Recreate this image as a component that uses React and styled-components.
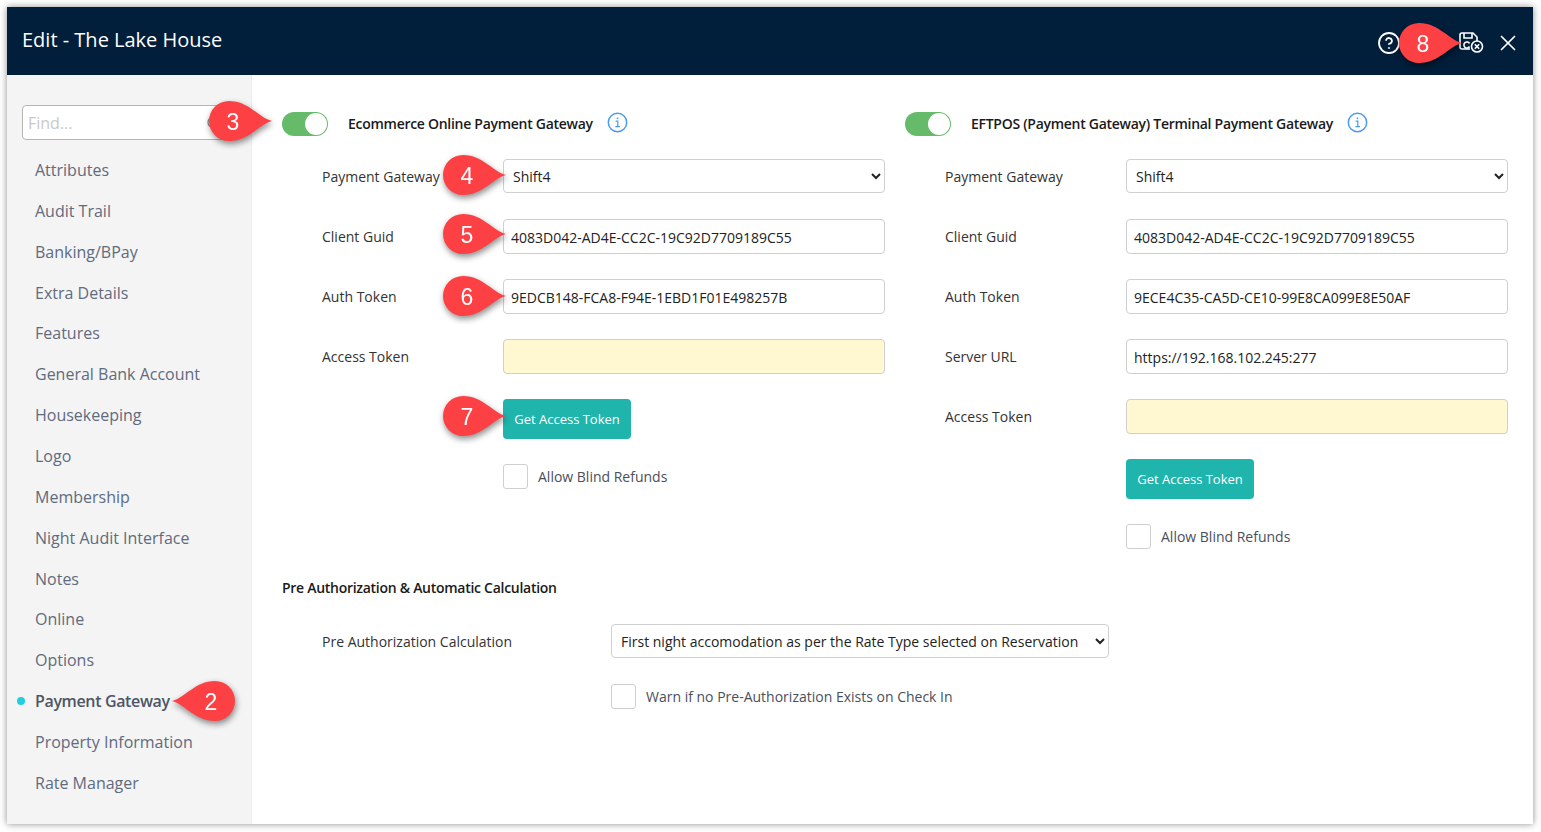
import styled, { createGlobalStyle } from 'styled-components';
import { Search, CircleHelp, X } from 'lucide-react';

const GlobalStyle = createGlobalStyle`
    html, body {
        margin: 0;
        padding: 0;
        background: #fff;
    }
    body {
        font-family: "Open Sans", "Liberation Sans", sans-serif;
        overflow: hidden;
    }
    * {
        box-sizing: border-box;
    }
`;

const Page = styled.div`
    width: 1541px;
    height: 832px;
    padding: 7px 8px 8px 7px;
`;

const Window = styled.div`
    position: relative;
    width: 1526px;
    height: 817px;
    display: flex;
    flex-direction: column;
    background: #fff;
    box-shadow: 0 0 7px rgba(0, 0, 0, 0.45);
`;

const Header = styled.header`
    height: 68px;
    flex: none;
    display: flex;
    align-items: center;
    justify-content: space-between;
    padding: 0 12px 0 15px;
    background: #011e3b;
    color: #fff;
`;

const Title = styled.h1`
    margin: -4px 0 0;
    font-size: 20px;
    font-weight: 400;
`;

const HeaderIcons = styled.div`
    display: flex;
    align-items: center;
    gap: 11px;
    padding-top: 3px;
`;

const HelpGap = styled.div`
    width: 36px;
`;

const Body = styled.div`
    flex: 1;
    display: flex;
    min-height: 0;
`;

const Sidebar = styled.aside`
    width: 245px;
    flex: none;
    padding: 30px 0 0 15px;
    background: #f4f4f4;
    border-right: 1px solid #ececec;
`;

const FindBox = styled.div`
    width: 210px;
    height: 35px;
    display: flex;
    align-items: center;
    padding: 0 5px;
    background: #fff;
    border: 1px solid #b5b5b5;
    border-radius: 4px;
    color: #8a8a8a;
`;

const FindInput = styled.input`
    width: 178px;
    border: 0;
    outline: 0;
    padding: 0;
    background: transparent;
    font: 400 16px "Open Sans", sans-serif;
    &::placeholder {
        color: #c9c9c9;
        opacity: 1;
    }
`;

const Nav = styled.nav`
    margin-top: 10px;
`;

const NavItem = styled.div`
    position: relative;
    height: 40.87px;
    line-height: 40px;
    padding-left: 13px;
    font-size: 16px;
    font-weight: ${(props) => (props.$active ? 600 : 400)};
    letter-spacing: ${(props) => (props.$active ? '-0.36px' : '0')};
    color: ${(props) => (props.$active ? '#4d5566' : '#5f6b7e')};

    ${(props) => props.$active && `
        &::before {
            content: "";
            position: absolute;
            left: -5px;
            top: 16px;
            width: 8px;
            height: 8px;
            border-radius: 50%;
            background: #1fcfe0;
        }
    `}
`;

const Content = styled.main`
    flex: 1;
    padding: 37px 25px 0 30px;
`;

const Columns = styled.div`
    display: grid;
    grid-template-columns: 603px 603px;
    gap: 20px;
    height: 466px;
`;

const GatewayHead = styled.div`
    display: flex;
    align-items: center;
    height: 24px;
    margin-bottom: 23px;
    color: #4a9bf0;

    svg {
        margin-top: -3px;
    }
`;

const Toggle = styled.div`
    position: relative;
    width: 46px;
    height: 24px;
    margin-right: 20px;
    border-radius: 12px;
    background: #66bb6a;

    &::after {
        content: "";
        position: absolute;
        right: 1px;
        top: 1px;
        width: 22px;
        height: 22px;
        border-radius: 50%;
        background: #fff;
    }
`;

const GatewayTitle = styled.div`
    margin: -2px 14px 0 0;
    font-size: 14px;
    font-weight: 600;
    color: #1a1a1a;
    letter-spacing: -0.28px;
`;

const Row = styled.div`
    display: grid;
    grid-template-columns: 181px 382px;
    align-items: center;
    height: 35px;
    margin: 0 0 25px 40px;
`;

const Label = styled.label`
    font-size: 14px;
    color: #333;
    white-space: nowrap;
`;

const TextInput = styled.input`
    width: 100%;
    height: 35px;
    padding: 2px 7px 0;
    border: 1px solid #cfcfcf;
    border-radius: 4px;
    outline: 0;
    background: ${(props) => (props.$empty ? '#fff8d1' : '#fff')};
    font: 400 14px "Open Sans", sans-serif;
    color: #222;
`;

const Select = styled.select`
    align-self: start;
    width: 100%;
    height: 34px;
    padding: 0 5px;
    border: 1px solid #cfcfcf;
    border-radius: 4px;
    outline: 0;
    background: #fff;
    font: 400 14px "Open Sans", sans-serif;
    color: #222;
`;

const TokenButton = styled.button`
    width: 128px;
    height: 40px;
    padding: 0;
    border: 0;
    border-radius: 4px;
    background: #1fb5ad;
    color: #fff;
    font: 400 13px "Open Sans", sans-serif;
`;

const ButtonRow = styled(Row)`
    height: 40px;
`;

const CheckRow = styled.div`
    display: flex;
    align-items: center;
    gap: 10px;
    height: 25px;
    margin-left: ${(props) => props.$left}px;
    font-size: 14px;
    color: #4a4f5c;
`;

const Checkbox = styled.span`
    width: 25px;
    height: 25px;
    flex: none;
    border: 1px solid #cfcfcf;
    border-radius: 3px;
    background: #fff;
`;

const SectionTitle = styled.h2`
    margin: 0 0 26px;
    font-size: 14px;
    line-height: 20px;
    font-weight: 600;
    color: #1a1a1a;
    letter-spacing: -0.28px;
`;

const CalcRow = styled.div`
    display: grid;
    grid-template-columns: 289px 498px;
    align-items: center;
    height: 34px;
    margin: 0 0 26px 40px;
`;

const Callout = styled.div`
    position: absolute;
    left: ${(props) => props.$x}px;
    top: ${(props) => props.$y}px;
    width: 66px;
    height: 44px;
    filter: drop-shadow(1px 3px 3px rgba(0, 0, 0, 0.45));
    color: #fff;
    font: 400 23px/44px "Liberation Sans", Arial, sans-serif;

    svg {
        display: block;
        transform: ${(props) => (props.$left ? 'scaleX(-1)' : 'none')};
    }

    span {
        position: absolute;
        top: 1px;
        width: 52px;
        text-align: center;
        ${(props) => (props.$left ? 'right: 0;' : 'left: 0;')}
    }
`;

function Marker({ n, x, y, left }) {
    return (
        <Callout $x={x - 11} $y={y - 7} $left={left}>
            <svg width="66" height="44" viewBox="0 0 66 44">
                <path d="M65 22C52 25 42 42 22 42A20 20 0 0 1 22 2C42 2 52 19 65 22Z" fill="#fd4044" />
            </svg>
            <span>{n}</span>
        </Callout>
    );
}

function SaveCloseIcon() {
    return (
        <svg width="25" height="22" viewBox="0 0 25 22" fill="none" stroke="currentColor" strokeWidth="1.6">
            <path d="M11 17H3a2 2 0 0 1-2-2V3a2 2 0 0 1 2-2h11l4 4v4" />
            <path d="M5 1v5h8V1" />
            <path d="M10.5 11.5a3 3 0 1 0 0 3" />
            <circle cx="18" cy="14.5" r="5.5" />
            <path d="M15.8 12.3l4.4 4.4M20.2 12.3l-4.4 4.4" />
        </svg>
    );
}

function InfoIcon() {
    return (
        <svg width="21" height="21" viewBox="0 0 21 21" fill="none" stroke="currentColor" strokeWidth="1.5">
            <circle cx="10.5" cy="10.5" r="9.2" />
            <path d="M8.6 9.2h2.2v5.2M8.4 14.6h4.6" strokeWidth="1.2" />
            <circle cx="10.5" cy="6.3" r="0.9" fill="currentColor" stroke="none" />
        </svg>
    );
}

const navItems = [
    'Attributes', 'Audit Trail', 'Banking/BPay', 'Extra Details', 'Features',
    'General Bank Account', 'Housekeeping', 'Logo', 'Membership', 'Night Audit Interface',
    'Notes', 'Online', 'Options', 'Payment Gateway', 'Property Information', 'Rate Manager',
];

function Gateway({ title, auth, server }) {
    return (
        <section>
            <GatewayHead>
                <Toggle />
                <GatewayTitle>{title}</GatewayTitle>
                <InfoIcon />
            </GatewayHead>
            <Row>
                <Label>Payment Gateway</Label>
                <Select defaultValue="Shift4"><option>Shift4</option></Select>
            </Row>
            <Row>
                <Label>Client Guid</Label>
                <TextInput readOnly value="4083D042-AD4E-CC2C-19C92D7709189C55" />
            </Row>
            <Row>
                <Label>Auth Token</Label>
                <TextInput readOnly value={auth} />
            </Row>
            {server && (
                <Row>
                    <Label>Server URL</Label>
                    <TextInput readOnly value={server} />
                </Row>
            )}
            <Row>
                <Label>Access Token</Label>
                <TextInput readOnly $empty value="" />
            </Row>
            <ButtonRow>
                <span />
                <TokenButton>Get Access Token</TokenButton>
            </ButtonRow>
            <CheckRow $left={221}>
                <Checkbox />
                Allow Blind Refunds
            </CheckRow>
        </section>
    );
}

export default function App() {
    return (
        <Page>
            <GlobalStyle />
            <Window>
                <Header>
                    <Title>Edit - The Lake House</Title>
                    <HeaderIcons>
                        <CircleHelp size={24} strokeWidth={1.8} />
                        <HelpGap />
                        <SaveCloseIcon />
                        <X size={26} strokeWidth={1.6} />
                    </HeaderIcons>
                </Header>
                <Body>
                    <Sidebar>
                        <FindBox>
                            <FindInput placeholder="Find..." />
                            <Search size={16} />
                        </FindBox>
                        <Nav>
                            {navItems.map((item) => (
                                <NavItem key={item} $active={item === 'Payment Gateway'}>{item}</NavItem>
                            ))}
                        </Nav>
                    </Sidebar>
                    <Content>
                        <Columns>
                            <Gateway
                                title="Ecommerce Online Payment Gateway"
                                auth="9EDCB148-FCA8-F94E-1EBD1F01E498257B"
                            />
                            <Gateway
                                title="EFTPOS (Payment Gateway) Terminal Payment Gateway"
                                auth="9ECE4C35-CA5D-CE10-99E8CA099E8E50AF"
                                server="https://192.168.102.245:277"
                            />
                        </Columns>
                        <SectionTitle>Pre Authorization &amp; Automatic Calculation</SectionTitle>
                        <CalcRow>
                            <Label>Pre Authorization Calculation</Label>
                            <Select defaultValue="first">
                                <option value="first">First night accomodation as per the Rate Type selected on Reservation</option>
                            </Select>
                        </CalcRow>
                        <CheckRow $left={329}>
                            <Checkbox />
                            Warn if no Pre-Authorization Exists on Check In
                        </CheckRow>
                    </Content>
                </Body>
                <Marker n="8" x={1401} y={21} />
                <Marker n="3" x={211} y={99} />
                <Marker n="4" x={445} y={153} />
                <Marker n="5" x={445} y={212} />
                <Marker n="6" x={445} y={274} />
                <Marker n="7" x={445} y={394} />
                <Marker n="2" x={175} y={679} left />
            </Window>
        </Page>
    );
}
